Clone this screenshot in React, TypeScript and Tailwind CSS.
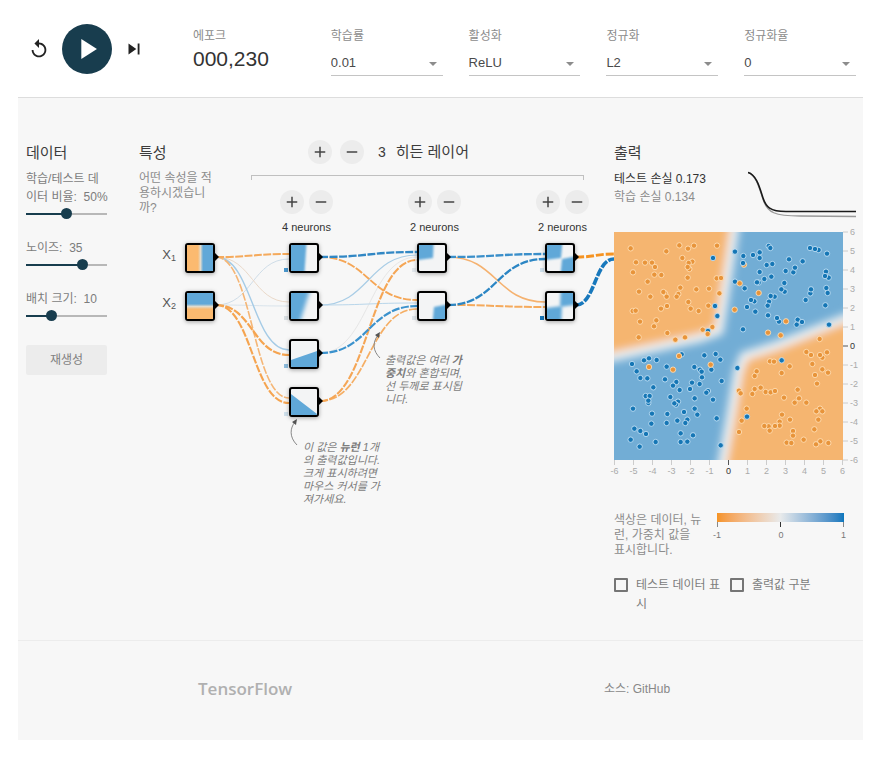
import React, { useState } from "react";
import { MdAdd, MdPlayArrow, MdRemove, MdReplay, MdSkipNext } from "react-icons/md";

const BLUE = "#0877bd";
const ORANGE = "#f59322";

/* ---------- header ---------- */

function SelectField({ id, label, options }: { id: string; label: string; options: string[] }) {
  return (
    <div>
      <label htmlFor={id} className="block text-xs leading-4 text-[#8c8c8c]">
        {label}
      </label>
      <div className="relative mt-[7px]">
        <select
          id={id}
          className="block h-[25px] w-full appearance-none border-b border-[#c4c4c4] bg-transparent p-0 text-[13px] text-[#4a4a4a] outline-none"
        >
          {options.map((o) => (
            <option key={o}>{o}</option>
          ))}
        </select>
        <svg className="pointer-events-none absolute right-1.5 top-[11px] h-1 w-2" viewBox="0 0 8 4">
          <path d="M0 0H8L4 4Z" fill="#8c8c8c" />
        </svg>
      </div>
    </div>
  );
}

function Header() {
  return (
    <header className="flex h-[98px] items-center border-b border-[#ddd] bg-white pl-[7px] pr-[7px]">
      <button aria-label="초기화" className="flex h-7 w-7 items-center justify-center text-[#222]">
        <MdReplay size={22} />
      </button>
      <button
        aria-label="실행"
        className="ml-[9px] flex h-[50px] w-[50px] items-center justify-center rounded-full bg-[#183d4e] text-white"
      >
        <MdPlayArrow size={34} />
      </button>
      <button aria-label="한 단계" className="ml-[10px] flex h-6 w-6 items-center justify-center text-[#222]">
        <MdSkipNext size={22} />
      </button>
      <div className="ml-[47px] grid flex-1 grid-cols-5 gap-[26px] self-start pt-7">
        <div>
          <div className="text-xs leading-4 text-[#8c8c8c]">에포크</div>
          <div className="mt-px text-[21px] leading-7 text-[#333]">000,230</div>
        </div>
        <SelectField id="lr" label="학습률" options={["0.01", "0.03", "0.1"]} />
        <SelectField id="act" label="활성화" options={["ReLU", "Tanh", "Sigmoid", "Linear"]} />
        <SelectField id="reg" label="정규화" options={["L2", "L1"]} />
        <SelectField id="rate" label="정규화율" options={["0", "0.001", "0.01"]} />
      </div>
    </header>
  );
}

/* ---------- data column ---------- */

type SliderProps = {
  id: string;
  label: React.ReactNode;
  unit?: string;
  min: number;
  max: number;
  initial: number;
  className: string;
};

function SliderField({ id, label, unit = "", min, max, initial, className }: SliderProps) {
  const [value, setValue] = useState(initial);
  const pct = ((value - min) / (max - min)) * 100;
  return (
    <div className={className}>
      <label htmlFor={id} className="block whitespace-nowrap text-xs leading-[18px] text-[#7c7c7c]">
        {label}&nbsp; {value}
        {unit}
      </label>
      <div className="flex h-[15px] items-center">
        <input
          id={id}
          type="range"
          min={min}
          max={max}
          value={value}
          onChange={(e) => setValue(Number(e.target.value))}
          style={{ backgroundImage: `linear-gradient(to right, #183d4e ${pct}%, #b8b8b8 ${pct}%)` }}
          className="block h-0.5 w-full appearance-none outline-none [&::-webkit-slider-thumb]:h-[11px] [&::-webkit-slider-thumb]:w-[11px] [&::-webkit-slider-thumb]:appearance-none [&::-webkit-slider-thumb]:rounded-full [&::-webkit-slider-thumb]:bg-[#183d4e]"
        />
      </div>
    </div>
  );
}

function DataColumn() {
  return (
    <section className="w-[81px] shrink-0">
      <h2 className="h-6 text-[15px] leading-[26px] text-[#3c3c3c]">데이터</h2>
      <SliderField
        id="ratio"
        className="mt-1.5"
        label={
          <>
            학습/테스트 데
            <br />
            이터 비율:
          </>
        }
        unit="%"
        min={0}
        max={100}
        initial={50}
      />
      <SliderField id="noise" className="mt-[18px]" label="노이즈:" min={0} max={48} initial={35} />
      <SliderField id="batch" className="mt-[18px]" label="배치 크기:" min={1} max={33} initial={10} />
      <button className="mt-[22px] h-[30px] w-full rounded-xs bg-[#ececec] text-xs text-[#808080]">재생성</button>
    </section>
  );
}

/* ---------- network ---------- */

type Kind = "x1" | "x2" | "a1" | "a2" | "a3" | "a4" | "b1" | "b2" | "c1" | "c2";

const TILE_BLUE = "#61a8d8";
const TILE_ORANGE = "#fbba70";

const TILE_SHAPES: Record<Kind, { d: string; blur: number }> = {
  x1: { d: "", blur: 0 },
  x2: { d: "", blur: 0 },
  a1: { d: "M-9-9H16L13 35H-9Z", blur: 1.3 },
  a2: { d: "M-9-9H21L7 35H-9Z", blur: 2.2 },
  a3: { d: "M-9 22L35 7V35H-9Z", blur: 0.7 },
  a4: { d: "M-9-2L35 32V35H-9Z", blur: 0.7 },
  b1: { d: "M-9-9H15L14 13L-9 16Z", blur: 1 },
  b2: { d: "M13 35L15 14L35 10V35Z", blur: 1 },
  c1: { d: "M-9-9H16L14 13L-9 16ZM13 35L15 14L35 10V35Z", blur: 1.2 },
  c2: { d: "M14-9L13 14L35 11V-9ZM-9 16L15 13L14 35H-9Z", blur: 1.6 },
};

function Tile({ kind }: { kind: Kind }) {
  const shape = TILE_SHAPES[kind];
  return (
    <div className="h-[30px] w-[30px] overflow-hidden rounded-[3px] border-2 border-black bg-[#f3f4f5] shadow-[0_1px_4px_rgba(0,0,0,0.35)]">
      <svg className="block h-full w-full" viewBox="0 0 26 26">
        {shape.d ? (
          <>
            <filter id={`soft-${kind}`} x="-50%" y="-50%" width="200%" height="200%">
              <feGaussianBlur stdDeviation={shape.blur} />
            </filter>
            <path d={shape.d} fill={TILE_BLUE} filter={`url(#soft-${kind})`} />
          </>
        ) : (
          <>
            <linearGradient id={`fade-${kind}`} x1="0" y1="0" x2={kind === "x1" ? 1 : 0} y2={kind === "x1" ? 0 : 1}>
              <stop offset="0.42" stopColor={kind === "x1" ? TILE_ORANGE : TILE_BLUE} />
              <stop offset="0.52" stopColor="#e3dccd" />
              <stop offset="0.62" stopColor={kind === "x1" ? TILE_BLUE : TILE_ORANGE} />
            </linearGradient>
            <rect width="26" height="26" fill={`url(#fade-${kind})`} />
          </>
        )}
      </svg>
    </div>
  );
}

const COLUMN_X = [46, 150, 278, 406];
const ROW_Y = [103, 151, 199, 247];

type Link = [col: number, from: number, to: number, offset: number, color: string, width: number, dash?: boolean];

const LINKS: Link[] = [
  [0, 1, 0, 16, "#cfdde8", 1],
  [0, 1, 1, 15, "#d9e4ec", 1],
  [0, 0, 1, 11, "#ead9c9", 1],
  [0, 0, 2, 11, "#a5cbe6", 1.4],
  [0, 0, 3, 11, "#f5b676", 1.6, true],
  [0, 0, 0, 11, "#f5aa5c", 2, true],
  [0, 1, 2, 16, "#f5a450", 2.2, true],
  [0, 1, 3, 16, "#f5a450", 2.1, true],
  [1, 2, 0, 14, "#e6e6e6", 1],
  [1, 1, 0, 12, "#a9cde6", 1.2],
  [1, 1, 1, 12, "#b9d6ea", 1],
  [1, 0, 1, 9, "#f5a656", 1.9, true],
  [1, 3, 1, 18, "#f5ae64", 1.7, true],
  [1, 3, 0, 17, "#f5a656", 2.1, true],
  [1, 2, 1, 15, "#3b92cd", 2.2, true],
  [1, 0, 0, 9, "#3187c4", 2.3, true],
  [2, 0, 1, 11, "#f5b270", 1.6],
  [2, 1, 1, 16, "#f5aa5c", 2, true],
  [2, 1, 0, 16, "#2c86c4", 2.3, true],
  [2, 0, 0, 11, "#3a8fca", 2.3, true],
];

const ARROWS: [number, number][] = [
  [0, 0], [0, 1], [1, 0], [1, 1], [1, 2], [1, 3], [2, 0], [2, 1], [3, 0], [3, 1],
];

const BIASES: [number, number, string][] = [
  [1, 0, "#4a97cd"], [1, 1, "#d8dee2"], [1, 2, "#8dbbdc"], [1, 3, "#cfe0ec"],
  [2, 0, "#e2e7eb"], [2, 1, "#dde3e8"], [3, 0, "#cfe0ec"], [3, 1, "#1374b8"],
];

function curve(x1: number, y1: number, x2: number, y2: number) {
  const m = (x1 + x2) / 2;
  return `M${x1} ${y1}C${m} ${y1} ${m} ${y2} ${x2} ${y2}`;
}

function Links() {
  return (
    <svg className="absolute left-0 top-0 h-[320px] w-[475px]" viewBox="0 0 475 320" fill="none">
      {LINKS.map(([c, f, t, o, color, w, dash], i) => (
        <path
          key={i}
          d={curve(COLUMN_X[c] + 31, ROW_Y[f] + 14, COLUMN_X[c + 1], ROW_Y[t] + o)}
          stroke={color}
          strokeWidth={w}
          strokeDasharray={dash ? "8 1.5" : undefined}
        />
      ))}
      <path d={curve(437, 117, 475, 114)} stroke={ORANGE} strokeWidth="3" strokeDasharray="8 2" />
      <path d={curve(437, 165, 475, 119)} stroke="#1878bc" strokeWidth="3.6" strokeDasharray="8 1.5" />
      {ARROWS.map(([c, r]) => (
        <path key={`${c}${r}`} d={`M${COLUMN_X[c] + 29} ${ROW_Y[r] + 9}l5 5l-5 5z`} fill="#000" />
      ))}
      {BIASES.map(([c, r, color]) => (
        <rect key={`${c}${r}`} x={COLUMN_X[c] - 5} y={ROW_Y[r] + 25} width="4" height="4" fill={color} />
      ))}
      <g stroke="#888" strokeWidth="1">
        <path d="M158 305C150 297 151 288 156 282" />
        <path d="M241 218C234 211 233 203 239 195" />
      </g>
      <path d="M158 279l-5 3 4 3zM241 192l-5 3 4 3z" fill="#555" />
    </svg>
  );
}

function RoundButton({ kind, label }: { kind: "add" | "remove"; label: string }) {
  return (
    <button
      aria-label={label}
      className="flex h-6 w-6 items-center justify-center rounded-full bg-[#ececec] text-[#444]"
    >
      {kind === "add" ? <MdAdd size={18} /> : <MdRemove size={18} />}
    </button>
  );
}

const LAYERS: { count: number; tiles: Kind[] }[] = [
  { count: 4, tiles: ["a1", "a2", "a3", "a4"] },
  { count: 2, tiles: ["b1", "b2"] },
  { count: 2, tiles: ["c1", "c2"] },
];

function Network() {
  return (
    <section className="relative ml-8 flex w-[475px] shrink-0">
      <Links />
      <div className="relative w-[112px]">
        <h2 className="h-6 text-[15px] leading-[26px] text-[#3c3c3c]">특성</h2>
        <p className="mt-[7px] text-xs leading-[15px] text-[#8c8c8c]">
          어떤 속성을 적
          <br />
          용하시겠습니
          <br />
          까?
        </p>
        <div className="mt-[27px] flex w-[76px] flex-col gap-[18px]">
          {(["x1", "x2"] as Kind[]).map((k, i) => (
            <div key={k} className="flex justify-end gap-[9px]">
              <span className="pt-1 text-[13px] leading-4 text-[#555]">
                X<sub className="text-[9px]">{i + 1}</sub>
              </span>
              <Tile kind={k} />
            </div>
          ))}
        </div>
      </div>

      <div className="relative w-[337px]">
        <div className="flex h-6 items-center pl-[57px]">
          <RoundButton kind="add" label="레이어 추가" />
          <span className="w-2" />
          <RoundButton kind="remove" label="레이어 제거" />
          <h2 className="ml-[14px] text-[15px] leading-6 text-[#3c3c3c]">
            <span className="mr-[10px] text-sm">3</span>히든 레이어
          </h2>
        </div>
        <div className="mt-[11px] h-[5px] w-[333px] border-x border-t border-[#c0c0c0]" />
        <div className="mt-[10px] flex gap-[75px] pl-[29px]">
          {LAYERS.map((layer, i) => (
            <div key={i} className="w-[53px] shrink-0">
              <div className="flex justify-between">
                <RoundButton kind="add" label="뉴런 추가" />
                <RoundButton kind="remove" label="뉴런 제거" />
              </div>
              <div className="mt-[5px] whitespace-nowrap text-center text-[11px] leading-4 text-[#333]">
                {layer.count} neurons
              </div>
              <div className="mt-2 flex flex-col gap-[18px] pl-[9px]">
                {layer.tiles.map((t) => (
                  <Tile key={t} kind={t} />
                ))}
              </div>
            </div>
          ))}
        </div>
      </div>

      <p className="absolute left-[164px] top-[301px] whitespace-nowrap text-[11px] italic leading-[13px] text-[#7c7c7c]">
        이 값은 <b>뉴런</b> 1개
        <br />
        의 출력값입니다.
        <br />
        크게 표시하려면
        <br />
        마우스 커서를 가
        <br />
        져가세요.
      </p>
      <p className="absolute left-[246px] top-[214px] whitespace-nowrap text-[11px] italic leading-[13px] text-[#7c7c7c]">
        출력값은 여러 <b>가</b>
        <br />
        <b>중치</b>와 혼합되며,
        <br />
        선 두께로 표시됩
        <br />
        니다.
      </p>
    </section>
  );
}

/* ---------- output ---------- */

type Pt = [number, number];

/* Sample positions are in thirds of a plot pixel, grouped by quadrant, each with its own origin. */
const GROUPS: { dx: number; dy: number; color: string; pts: Pt[] }[] = [
  {
    dx: -9, dy: -7, color: ORANGE,
    pts: [
      [77,70],[184,79],[223,61],[249,71],[267,62],[336,62],[232,99],[93,112],[120,113],[141,113],[150,126],[262,110],
      [251,114],[253,132],[248,126],[84,142],[148,149],[169,150],[248,158],[335,160],[348,159],[128,170],[226,188],
      [274,193],[312,191],[343,205],[102,200],[136,215],[180,205],[175,201],[185,215],[220,207],[215,215],[250,231],
      [83,258],[92,257],[168,251],[186,243],[257,251],[281,258],[310,242],[105,290],[154,286],[147,304],[187,324],
      [211,344],[240,337],[101,337],[293,314],[322,306],
    ],
  },
  { dx: -9, dy: -7, color: BLUE, pts: [[324,99],[330,243],[337,273],[309,318]] },
  { dx: -9, dy: -7, color: ORANGE, pts: [[308,327]] },
  { dx: 111, dy: -7, color: ORANGE, pts: [[57,119]] },
  {
    dx: 111, dy: -7, color: BLUE,
    pts: [
      [30,80],[55,93],[54,114],[84,90],[104,82],[104,99],[131,63],[136,69],[125,120],[142,117],[104,141],[118,162],
      [139,155],[101,173],[96,172],[30,170],[59,190],[192,103],[233,109],[182,138],[205,142],[210,128],[178,174],
      [179,200],[169,193],[255,69],[281,75],[270,72],[306,86],[303,140],[311,158],[300,153],[304,189],[308,204],
      [256,205],[258,193],[242,225],[301,241],[312,299],[149,215],[137,213],[132,230],[128,242],[129,271],[88,229],
      [78,225],[66,246],[91,260],[54,313],[162,290],[156,279],[218,284],[231,291],[215,299],
    ],
  },
  { dx: 111, dy: -7, color: ORANGE, pts: [[44,175],[101,204],[29,254],[183,289],[129,323],[167,331],[284,342]] },
  {
    dx: -9, dy: 113, color: BLUE,
    pts: [
      [81,57],[117,46],[132,40],[155,45],[95,79],[106,99],[127,100],[185,65],[145,127],[122,153],[134,153],[130,174],
      [130,167],[84,191],[141,206],[139,236],[88,251],[106,258],[123,267],[77,284],[104,305],[152,291],[180,103],
      [214,111],[204,122],[224,135],[196,156],[219,170],[213,179],[208,175],[187,207],[185,234],[217,227],[227,265],
      [227,291],[247,290],[264,271],[247,224],[241,234],[237,201],[269,191],[277,209],[269,160],[255,132],[261,113],
      [284,117],[291,97],[268,66],[285,74],[290,80],[298,31],[332,27],[346,44],[319,74],[350,108],[309,138],[304,143],
      [324,164],[335,220],[347,301],[230,28],[397,69],
    ],
  },
  {
    dx: -9, dy: 113, color: ORANGE,
    pts: [
      [604,21],[618,30],[666,22],[652,38],[645,30],[495,49],[507,50],[554,64],[622,57],[652,73],[669,83],[630,90],
      [455,79],[449,93],[530,84],[636,116],[467,128],[449,132],[482,141],[497,142],[510,138],[442,147],[402,137],
      [407,145],[578,134],[537,158],[582,160],[569,173],[604,173],[425,191],[410,227],[402,261],[531,209],[555,224],
      [524,230],[524,242],[510,243],[491,244],[478,243],[494,257],[564,258],[564,272],[596,284],[545,293],[559,294],
      [645,191],[634,199],[652,199],[640,224],[628,253],[646,289],[633,298],[670,294],[132,66],[222,33],[204,74],
      [317,59],
    ],
  },
  { dx: -9, dy: 113, color: BLUE, pts: [[530,46],[426,215]] },
];

const TICKS = [-6, -5, -4, -3, -2, -1, 0, 1, 2, 3, 4, 5, 6];
const REGION_A = "M-20-20H123L113 48L105 99L86 106L-20 129Z";
const REGION_B = "M250 79L164 113L130 124L124 140L116 188L105 250H250Z";

function Heatmap() {
  return (
    <svg className="mt-[26px] block h-auto w-full overflow-visible" viewBox="0 0 249 250">
      <defs>
        <clipPath id="plot">
          <rect width="229" height="228" />
        </clipPath>
        <filter id="soft" filterUnits="userSpaceOnUse" x="-40" y="-40" width="320" height="320">
          <feGaussianBlur stdDeviation="4.5" />
        </filter>
      </defs>
      <g clipPath="url(#plot)">
        <rect width="229" height="228" fill="#72add5" />
        <g filter="url(#soft)">
          <path d={REGION_A} fill="#f5b570" stroke="#edf0f2" strokeWidth="9" />
          <path d={REGION_B} fill="#f5b570" stroke="#edf0f2" strokeWidth="9" />
        </g>
        {GROUPS.map((g, i) => (
          <g
            key={i}
            fill={g.color === ORANGE ? "#e8943a" : "#1576b5"}
            stroke={g.color === ORANGE ? "#ffe0b8" : "#c4e2f6"}
            strokeOpacity="0.85"
            strokeWidth="1"
          >
            {g.pts.map(([x, y], j) => (
              <circle key={j} cx={x / 3 + g.dx} cy={y / 3 + g.dy} r="2.7" />
            ))}
          </g>
        ))}
      </g>
      {TICKS.map((t) => {
        const x = 114.5 + t * 19;
        const y = 114 - t * 19;
        const ink = t === 0 ? "#333" : "#aaa";
        return (
          <g key={t} fill={ink} stroke="none" fontSize="9">
            <path d={`M${x} 228v5M229 ${y}h5`} stroke={t === 0 ? "#555" : "#ccc"} />
            <text x={x} y="242" textAnchor="middle">
              {t}
            </text>
            <text x="236" y={y + 3}>
              {t}
            </text>
          </g>
        );
      })}
    </svg>
  );
}

function Check({ label }: { label: React.ReactNode }) {
  return (
    <label className="flex items-start gap-2 text-xs leading-[19px] text-[#7c7c7c]">
      <input
        type="checkbox"
        className="mt-0.5 h-[14px] w-[14px] shrink-0 appearance-none rounded-[1px] border-2 border-[#757575] bg-transparent checked:bg-[#183d4e]"
      />
      <span className="whitespace-nowrap">{label}</span>
    </label>
  );
}

function Output() {
  return (
    <section className="relative max-w-[320px] flex-1">
      <h2 className="h-6 text-[15px] leading-[26px] text-[#3c3c3c]">출력</h2>
      <div className="mt-1.5 flex h-9 justify-between pr-[7px]">
        <div className="whitespace-nowrap text-xs leading-[18px]">
          <div className="text-[#333]">테스트 손실 0.173</div>
          <div className="text-[#8c8c8c]">학습 손실 0.134</div>
        </div>
        <svg className="block h-[50px] w-[108px]" viewBox="0 0 108 50" fill="none">
          <path d="M0 2.5C9 5 12 22 16 32S26 46 52 46L108 46.5" stroke="#999" strokeWidth="1.3" />
          <path d="M0 2.5C9 5 12 19 15 28S22 41.5 38 41.5H108" stroke="#1a1a1a" strokeWidth="1.6" />
        </svg>
      </div>
      <Heatmap />

      <div className="mt-[30px] flex justify-between pr-[19px]">
        <p className="whitespace-nowrap pt-px text-xs leading-[15px] text-[#8c8c8c]">
          색상은 데이터, 뉴
          <br />
          런, 가중치 값을
          <br />
          표시합니다.
        </p>
        <div className="w-[127px]">
          <div className="mt-px h-[9px] bg-linear-to-r from-[#f59322] via-[#e8eaeb] to-[#0877bd]" />
          <div className="flex h-[5px] justify-between">
            <span className="w-px bg-[#888]" />
            <span className="w-px bg-[#333]" />
            <span className="w-px bg-[#888]" />
          </div>
          <div className="-ml-1 -mr-0.5 mt-0.5 flex justify-between text-[9px] leading-3 text-[#777]">
            <span>-1</span>
            <span>0</span>
            <span>1</span>
          </div>
        </div>
      </div>

      <div className="mt-[18px] flex gap-[10px]">
        <Check
          label={
            <>
              테스트 데이터 표
              <br />시
            </>
          }
        />
        <Check label="출력값 구분" />
      </div>
    </section>
  );
}

export default function App() {
  return (
    <div className="min-h-[760px] bg-white pl-[18px] pr-[25px] font-['Liberation_Sans','Noto_Sans_CJK_KR',sans-serif]">
      <Header />
      <main className="flex bg-[#f7f7f7] pb-[26px] pl-2 pt-[42px]">
        <DataColumn />
        <Network />
        <Output />
      </main>
      <footer className="flex h-[100px] items-center border-t border-[#ececec] bg-[#f7f7f7] pb-1 pl-[180px]">
        <a href="#tensorflow" className="w-[406px] font-['Open_Sans',sans-serif] text-[17px] font-semibold text-[#b0b0b0]">
          TensorFlow
        </a>
        <span className="text-xs text-[#888]">
          소스: <a href="#github">GitHub</a>
        </span>
      </footer>
    </div>
  );
}
